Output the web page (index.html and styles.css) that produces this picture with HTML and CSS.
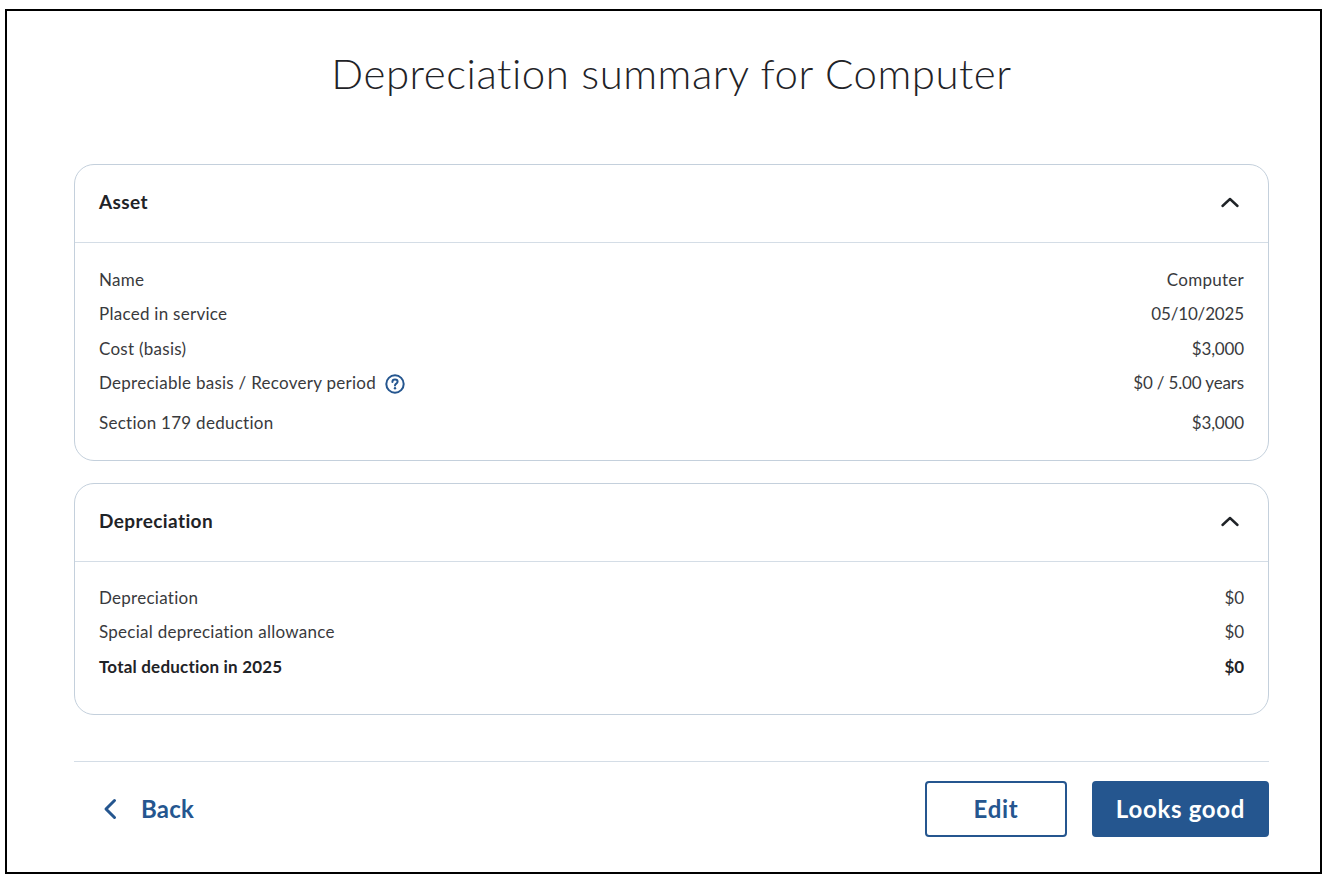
FILE: index.html
```html
<!DOCTYPE html>
<html lang="en">
<head>
<meta charset="utf-8">
<title>Depreciation summary for Computer</title>
<link rel="stylesheet" href="styles.css">
</head>
<body>
<main class="frame">
  <h1 class="title">Depreciation summary for Computer</h1>
  <section class="card card-asset">
    <header class="card-head">
      <h2>Asset</h2>
      <svg class="chev" viewBox="0 0 20 12" width="20" height="12"><path d="M2.5 10 L10 3 L17.5 10" fill="none" stroke="#1f2327" stroke-width="2.4" stroke-linecap="round" stroke-linejoin="round"/></svg>
    </header>
    <div class="rows">
      <div class="row"><span>Name</span><span>Computer</span></div>
      <div class="row"><span>Placed in service</span><span class="num">05/10/2025</span></div>
      <div class="row"><span>Cost (basis)</span><span class="num">$3,000</span></div>
      <div class="row row-help">
        <span class="label-help">Depreciable basis / Recovery period
          <svg class="help" viewBox="0 0 20 20" width="20" height="20"><circle cx="10" cy="10" r="8.7" fill="none" stroke="#25568f" stroke-width="2"/><path d="M7.4 8 C7.4 6.4 8.6 5.6 10 5.6 C11.5 5.6 12.6 6.5 12.6 7.8 C12.6 9.6 10 9.6 10 11.4" fill="none" stroke="#25568f" stroke-width="2" stroke-linecap="round"/><circle cx="10" cy="14.2" r="1.2" fill="#25568f"/></svg>
        </span>
        <span class="num">$0 / 5.00 years</span>
      </div>
      <div class="row"><span>Section 179 deduction</span><span class="num">$3,000</span></div>
    </div>
  </section>
  <section class="card card-dep">
    <header class="card-head">
      <h2>Depreciation</h2>
      <svg class="chev" viewBox="0 0 20 12" width="20" height="12"><path d="M2.5 10 L10 3 L17.5 10" fill="none" stroke="#1f2327" stroke-width="2.4" stroke-linecap="round" stroke-linejoin="round"/></svg>
    </header>
    <div class="rows rows-dep">
      <div class="row"><span>Depreciation</span><span class="num">$0</span></div>
      <div class="row"><span>Special depreciation allowance</span><span class="num">$0</span></div>
      <div class="row row-total"><span>Total deduction in 2025</span><span class="num">$0</span></div>
    </div>
  </section>
  <footer class="actions">
    <a class="back" href="#">
      <svg viewBox="0 0 14 22" width="14" height="22"><path d="M11.5 2.5 L3 11 L11.5 19.5" fill="none" stroke="#25568f" stroke-width="3" stroke-linecap="round" stroke-linejoin="round"/></svg>
      <span class="back-text">Back</span>
    </a>
    <div class="buttons">
      <button class="btn btn-outline" type="button">Edit</button>
      <button class="btn btn-solid" type="button">Looks good</button>
    </div>
  </footer>
</main>
</body>
</html>
```
FILE: styles.css
```css
* { box-sizing: border-box; }
html, body { margin: 0; padding: 0; background: #fff; }
body {
  padding: 9px 9px 9px 5px;
  font-family: Lato, "Open Sans", sans-serif;
  color: #393a3d;
}
.frame {
  width: 1317px;
  height: 865px;
  border: 2px solid #000;
  padding: 0 51px 0 67px;
  background: #fff;
}
.title {
  margin: 0;
  padding-top: 34px;
  height: 153px;
  text-align: center;
  font-size: 42px;
  line-height: 56px;
  font-weight: 300;
  letter-spacing: 0.52px;
  color: #1f2327;
}
.card {
  border: 1px solid #c4d0dc;
  border-radius: 20px;
  background: #fff;
}
.card-asset { height: 297px; }
.card-dep { height: 232px; margin-top: 22px; }
.card-head {
  height: 78px;
  padding: 0 28px 4px 24px;
  border-bottom: 1px solid #d4dde6;
  display: flex;
  align-items: center;
  justify-content: space-between;
}
.card-head h2 {
  margin: 0;
  font-size: 19px;
  font-weight: 700;
  letter-spacing: 0.4px;
  color: #1f2327;
}
.rows { padding: 19px 24px 0; }
.rows-dep { padding-top: 18px; }
.row {
  display: flex;
  justify-content: space-between;
  align-items: center;
  height: 34.5px;
  font-size: 17px;
  letter-spacing: 0.27px;
}
.num { letter-spacing: -0.15px; }
.row-help { height: 40px; padding-bottom: 7px; }
.label-help { display: flex; align-items: center; gap: 9px; }
.help { margin-top: 3px; }
.row-total { font-weight: 700; letter-spacing: 0.2px; color: #1f2327; }
.actions {
  margin-top: 46px;
  border-top: 1px solid #d4dde6;
  display: flex;
  justify-content: space-between;
  align-items: center;
  padding-top: 19px;
}
.back {
  display: flex;
  align-items: center;
  gap: 24px;
  margin-left: 29px;
  color: #25568f;
  font-size: 24px;
  font-weight: 700;
  letter-spacing: 0.25px;
  text-decoration: none;
}
.back-text { padding-bottom: 2px; }
.buttons { display: flex; gap: 25px; }
.btn {
  height: 56px;
  border-radius: 4px;
  font: 700 24px Lato, "Open Sans", sans-serif;
  letter-spacing: 0.7px;
  padding: 0 0 2px;
}
.btn-outline {
  width: 142px;
  background: #fff;
  border: 2px solid #25568f;
  color: #25568f;
}
.btn-solid {
  width: 177px;
  background: #25568f;
  border: 2px solid #25568f;
  color: #fff;
}
```
